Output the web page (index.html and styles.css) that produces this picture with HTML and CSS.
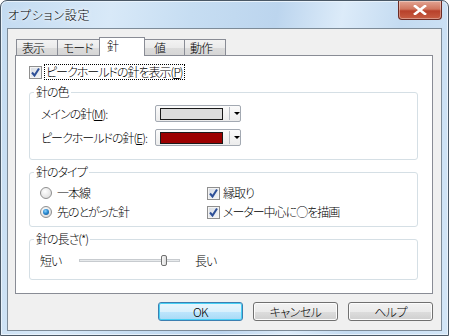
FILE: index.html
```html
<!DOCTYPE html>
<html lang="ja">
<head>
    <meta charset="UTF-8">
    <title>オプション設定</title>
    <link rel="stylesheet" href="styles.css">
</head>
<body>
    <div class="window">
        <div class="titlebar">
            <span class="title">オプション設定</span>
            <span class="close">
                <svg width="14" height="10" viewBox="0 0 14 10"><path d="M2 1 L12 9 M12 1 L2 9" stroke="#fff" stroke-width="2.6" stroke-linecap="square"/></svg>
            </span>
        </div>

        <div class="client">
            <div class="tabs">
                <div class="tab t1">表示</div>
                <div class="tab t2">モード</div>
                <div class="tab t3 active">針</div>
                <div class="tab t4">値</div>
                <div class="tab t5">動作</div>
            </div>

            <div class="panel">
                <div class="check top-check">
                    <span class="box"><svg width="11" height="11" viewBox="0 0 11 11"><path d="M2 5.5 L4.5 8.5 L9 1.5" fill="none" stroke="#2d4f97" stroke-width="2"/></svg></span>
                    <span class="focus">ピークホールドの針を表示(<u>P</u>)</span>
                </div>

                <fieldset class="group g-color">
                    <legend>針の色</legend>
                    <div class="row">
                        <span class="lbl">メインの針(<u>M</u>):</span>
                        <span class="combo"><span class="swatch light"></span><span class="sep"></span><span class="arrow"></span></span>
                    </div>
                    <div class="row">
                        <span class="lbl">ピークホールドの針(<u>E</u>):</span>
                        <span class="combo"><span class="swatch dark"></span><span class="sep"></span><span class="arrow"></span></span>
                    </div>
                </fieldset>

                <fieldset class="group g-type">
                    <legend>針のタイプ</legend>
                    <div class="grid">
                        <div class="check"><span class="radio"></span><span>一本線</span></div>
                        <div class="check"><span class="box"><svg width="11" height="11" viewBox="0 0 11 11"><path d="M2 5.5 L4.5 8.5 L9 1.5" fill="none" stroke="#2d4f97" stroke-width="2"/></svg></span><span>縁取り</span></div>
                        <div class="check"><span class="radio on"></span><span>先のとがった針</span></div>
                        <div class="check"><span class="box"><svg width="11" height="11" viewBox="0 0 11 11"><path d="M2 5.5 L4.5 8.5 L9 1.5" fill="none" stroke="#2d4f97" stroke-width="2"/></svg></span><span>メーター中心に○を描画</span></div>
                    </div>
                </fieldset>

                <fieldset class="group g-len">
                    <legend>針の長さ(*)</legend>
                    <div class="slider-row">
                        <span class="short">短い</span>
                        <span class="track"><span class="thumb"></span></span>
                        <span>長い</span>
                    </div>
                </fieldset>
            </div>

            <div class="buttons">
                <button class="btn default">OK</button>
                <button class="btn">キャンセル</button>
                <button class="btn">ヘルプ</button>
            </div>
        </div>
    </div>
</body>
</html>
```

FILE: styles.css
```css
*{
    margin: 0;
    padding: 0;
    box-sizing: border-box;
}

body{
    width: 449px;
    height: 336px;
    overflow: hidden;
    background: #fff;
    font-family: "Noto Sans CJK JP", "Liberation Sans", sans-serif;
    font-size: 12px;
    font-weight: 300;
    font-feature-settings: "palt";
    letter-spacing: -1px;
    color: #000;
}

.window{
    width: 449px;
    height: 336px;
    border: 1px solid #4a5866;
    border-radius: 7px 7px 0 0;
    padding: 0 6px 5px 6px;
    background: linear-gradient(100deg, #c3dbf1 0%, #d8e9f8 22%, #c6ddf2 38%, #bcd5ee 55%, #dcebf9 68%, #c4dbf1 80%, #d3e6f7 100%);
    box-shadow: inset 0 0 0 1px #e8f2fb;
}

.titlebar{
    height: 27px;
    display: flex;
    align-items: flex-start;
    padding-left: 1px;
}

.title{
    margin-top: 6px;
    font-size: 12px;
    line-height: 16px;
    letter-spacing: 0.8px;
    text-shadow: 0 0 6px #fff, 0 0 3px #fff;
}

.close{
    margin-left: auto;
    width: 44px;
    height: 19px;
    border: 1px solid #6c2b24;
    border-top: none;
    border-radius: 0 0 4px 4px;
    background: linear-gradient(#e2a493 0%, #d0765f 45%, #b8412b 55%, #c75d43 100%);
    display: flex;
    justify-content: center;
    align-items: center;
    box-shadow: inset 0 0 0 1px rgba(255,255,255,0.35);
}

.client{
    height: 303px;
    border: 1px solid #7d8b98;
    background: #f0f0f0;
    padding: 8px 0 0 7px;
}

.tabs{
    display: flex;
    align-items: flex-end;
    height: 18px;
    padding-left: 1px;
    position: relative;
    z-index: 1;
}

.tab{
    height: 16px;
    border: 1px solid #898c95;
    border-bottom: none;
    margin-right: -1px;
    padding-left: 5px;
    line-height: 15px;
    background: linear-gradient(#f3f3f3 0%, #ebebeb 50%, #dcdcdc 51%, #d6d6d6 100%);
}

.t1{ width: 42px; }
.t2{ width: 43px; }
.t3{ width: 46px; padding-left: 7px; }
.t4{ width: 41px; padding-left: 9px; }
.t5{ width: 42px; }

.tab.active{
    height: 19px;
    margin-bottom: -1px;
    background: #fff;
    line-height: 16px;
}

.panel{
    width: 418px;
    height: 239px;
    background: #fff;
    border: 1px solid #898c95;
    padding: 9px 14px 0 13px;
}

.check{
    display: flex;
    align-items: center;
    height: 14px;
    line-height: 14px;
    white-space: nowrap;
}

.box{
    width: 13px;
    height: 13px;
    flex-shrink: 0;
    border: 1px solid #8f8f8f;
    background: linear-gradient(135deg, #d6dbe3 0%, #f4f6f8 100%);
    box-shadow: inset 0 0 0 1px #f4f4f4;
    display: flex;
    justify-content: center;
    align-items: center;
    margin-right: 3px;
}

.focus{
    outline: 1px dotted #000;
    padding: 0 1px;
}

.radio{
    width: 12px;
    height: 12px;
    flex-shrink: 0;
    border-radius: 50%;
    border: 1px solid #8f8f8f;
    background: radial-gradient(circle at 40% 35%, #ffffff 0%, #e6e6e6 60%, #d4d4d4 100%);
    margin-right: 5px;
    display: flex;
    justify-content: center;
    align-items: center;
}

.radio.on::after{
    content: "";
    width: 6px;
    height: 6px;
    border-radius: 50%;
    background: radial-gradient(circle at 40% 35%, #8fd4ff 0%, #2a8ad0 45%, #0f4a86 100%);
}

.group{
    width: 389px;
    border: 1px solid #d5dfe5;
    border-radius: 3px;
    padding: 6px 10px 0 10px;
}

.group legend{
    margin-left: -6px;
    padding: 0 2px;
    line-height: 14px;
}

.g-color{
    height: 75px;
    margin-top: 6px;
}

.row{
    display: flex;
    align-items: center;
    height: 17px;
    padding-left: 1px;
    margin-bottom: 7px;
}

.lbl{
    width: 114px;
    white-space: nowrap;
}

.combo{
    width: 86px;
    height: 17px;
    border: 1px solid #a3a9b2;
    border-radius: 2px;
    background: linear-gradient(#fbfbfb, #ececec);
    display: flex;
    align-items: center;
    padding-left: 4px;
}

.swatch{
    width: 63px;
    height: 12px;
    border: 1px solid #1a1a1a;
}

.swatch.light{ background: #dcdcdc; }
.swatch.dark{ background: #9c0000; }

.sep{
    width: 1px;
    height: 13px;
    background: #b8bcc2;
    margin-left: 6px;
}

.arrow{
    width: 0;
    height: 0;
    border-left: 3px solid transparent;
    border-right: 3px solid transparent;
    border-top: 3px solid #000;
    margin-left: 4px;
}

.g-type{
    height: 62px;
    margin-top: 5px;
}

.grid{
    display: grid;
    grid-template-columns: 167px 1fr;
    grid-auto-rows: 16px;
    row-gap: 3px;
}

.grid .check{
    height: 16px;
}

.g-len{
    height: 48px;
    margin-top: 5px;
}

.slider-row{
    display: flex;
    align-items: center;
    height: 16px;
}

.short{
    width: 39px;
}

.track{
    position: relative;
    width: 101px;
    height: 3px;
    border: 1px solid #c7cbcf;
    background: #e7eaec;
    margin-right: 15px;
}

.thumb{
    position: absolute;
    left: 81px;
    top: -5px;
    width: 6px;
    height: 11px;
    border: 1px solid #707070;
    border-radius: 2px;
    background: linear-gradient(90deg, #f6f6f6, #dcdcdc);
}

.buttons{
    display: flex;
    justify-content: flex-end;
    gap: 10px;
    padding-right: 8px;
    margin-top: 8px;
}

.btn{
    width: 85px;
    height: 19px;
    font-family: inherit;
    font-size: 12px;
    font-weight: 300;
    font-feature-settings: "palt";
    letter-spacing: -0.5px;
    line-height: 15px;
    border: 1px solid #707070;
    border-radius: 3px;
    background: linear-gradient(#f2f2f2 0%, #ebebeb 50%, #dddddd 51%, #cfcfcf 100%);
    box-shadow: inset 0 0 0 1px #fcfcfc;
    color: #000;
}

.btn.default{
    border-color: #3c7fb1;
    box-shadow: inset 0 0 0 1px #48d0f5;
    background: linear-gradient(#eaf6fd 0%, #d9f0fc 50%, #bee6fd 51%, #a7d9f5 100%);
}
```
